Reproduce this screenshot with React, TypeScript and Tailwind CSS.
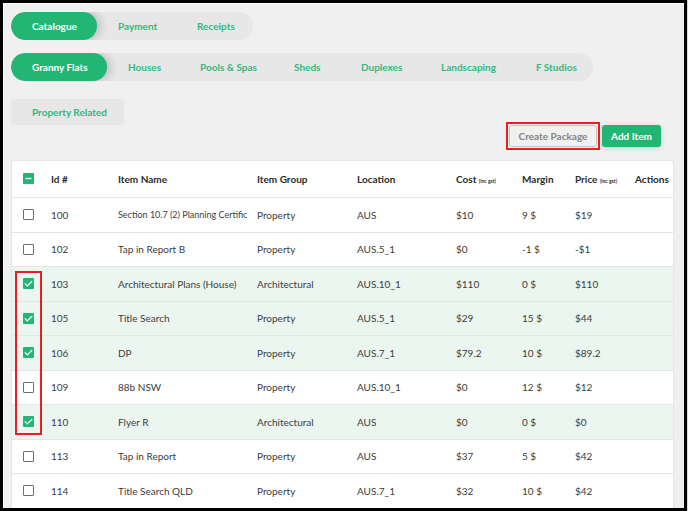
import { useEffect, useRef, useState } from "react";
import clsx from "clsx";

const sections = [
  { label: "Catalogue", width: "w-[86px]" },
  { label: "Payment", width: "w-[79px]" },
  { label: "Receipts", width: "w-[77px]" },
];

const categories = [
  { label: "Granny Flats", width: "w-[96px]" },
  { label: "Houses", width: "w-[72px]" },
  { label: "Pools & Spas", width: "w-[94px]" },
  { label: "Sheds", width: "w-[67px]" },
  { label: "Duplexes", width: "w-[80px]" },
  { label: "Landscaping", width: "w-[95px]" },
  { label: "F Studios", width: "w-[78px]" },
];

const items = [
  { id: 100, name: "Section 10.7 (2) Planning Certific", group: "Property", location: "AUS", cost: "$10", margin: "9 $", price: "$19" },
  { id: 102, name: "Tap in Report B", group: "Property", location: "AUS.5_1", cost: "$0", margin: "-1 $", price: "-$1" },
  { id: 103, name: "Architectural Plans (House)", group: "Architectural", location: "AUS.10_1", cost: "$110", margin: "0 $", price: "$110" },
  { id: 105, name: "Title Search", group: "Property", location: "AUS.5_1", cost: "$29", margin: "15 $", price: "$44" },
  { id: 106, name: "DP", group: "Property", location: "AUS.7_1", cost: "$79.2", margin: "10 $", price: "$89.2" },
  { id: 109, name: "88b NSW", group: "Property", location: "AUS.10_1", cost: "$0", margin: "12 $", price: "$12" },
  { id: 110, name: "Flyer R", group: "Architectural", location: "AUS", cost: "$0", margin: "0 $", price: "$0" },
  { id: 113, name: "Tap in Report", group: "Property", location: "AUS", cost: "$37", margin: "5 $", price: "$42" },
  { id: 114, name: "Title Search QLD", group: "Property", location: "AUS.7_1", cost: "$32", margin: "10 $", price: "$42" },
];

type Tab = { label: string; width: string };

function TabBar({ name, tabs }: { name: string; tabs: Tab[] }) {
  const [active, setActive] = useState(tabs[0].label);

  return (
    <nav aria-label={name} className="flex h-7 w-fit overflow-hidden rounded-full bg-[#e7e7e7]">
      {tabs.map((tab) => (
        <button
          key={tab.label}
          type="button"
          onClick={() => setActive(tab.label)}
          className={clsx(
            "h-7 shrink-0 rounded-full pl-[21px] text-left font-bold whitespace-nowrap",
            tab.width,
            active === tab.label ? "bg-[#23b574] text-white shadow-[3px_0_10px_rgba(0,0,0,0.2)]" : "text-[#35b77d]"
          )}
        >
          {tab.label}
        </button>
      ))}
    </nav>
  );
}

type CheckProps = { label: string; checked: boolean; mixed?: boolean; onChange: () => void };

function Check({ label, checked, mixed = false, onChange }: CheckProps) {
  const ref = useRef<HTMLInputElement>(null);

  useEffect(() => {
    if (ref.current) ref.current.indeterminate = mixed;
  }, [mixed]);

  return (
    <label className="relative ml-[11px] block size-[11px]">
      <input
        ref={ref}
        type="checkbox"
        aria-label={label}
        checked={checked}
        onChange={onChange}
        className={clsx(
          "block size-[11px] appearance-none rounded-[1px]",
          checked || mixed ? "bg-[#23b574]" : "border border-[#6f6f6f] bg-white"
        )}
      />
      {(checked || mixed) && (
        <svg viewBox="0 0 11 11" className="pointer-events-none absolute inset-0 size-[11px]" fill="none" stroke="white" strokeWidth="1.3">
          <path d={mixed ? "M2.5 5.5h6" : "M1.8 5.4l2.5 2.5 4.9-4.9"} />
        </svg>
      )}
    </label>
  );
}

export default function App() {
  const [selected, setSelected] = useState([103, 105, 106, 110]);
  const all = selected.length === items.length;

  const toggle = (id: number) =>
    setSelected((ids) => (ids.includes(id) ? ids.filter((other) => other !== id) : [...ids, id]));

  return (
    <div className="min-h-screen bg-[#d9d9d9] pr-px pb-px font-[Lato,sans-serif] text-[10px] leading-3 text-[#3c3c3c]">
      <main className="border-[3px] border-black bg-[#f0f0f0] pt-[9px] pr-[10px] pl-2 shadow-[inset_1px_1px_0_#fff]">
        <TabBar name="Sections" tabs={sections} />
        <div className="mt-[13px]">
          <TabBar name="Categories" tabs={categories} />
        </div>
        <button type="button" className="mt-[18px] block h-[26px] w-[113px] rounded-[3px] bg-[#e7e7e7] pl-[21px] text-left font-bold text-[#35b77d]">
          Property Related
        </button>

        <div className="mr-[13px] flex justify-end gap-[5px]">
          <div className="relative">
            <button type="button" className="block h-[22px] w-[88px] rounded-[3px] border border-[#c4c4c4] font-bold text-[#858585]">
              Create Package
            </button>
            <span className="pointer-events-none absolute -inset-[3px] border-2 border-[#ed1c24]" />
          </div>
          <button type="button" className="h-[22px] w-[59px] rounded-[3px] bg-[#23b574] font-bold text-white shadow-[0_1px_5px_rgba(0,0,0,0.15)]">
            Add Item
          </button>
        </div>

        <div className="relative mt-[13px] rounded-t-[3px] border border-b-0 border-[#e6e6e6] bg-white">
          <table className="w-full table-fixed border-collapse text-left">
            <colgroup>
              <col className="w-[39px]" />
              <col className="w-[67px]" />
              <col />
              <col className="w-[100px]" />
              <col className="w-[99px]" />
              <col className="w-[66px]" />
              <col className="w-[53px]" />
              <col className="w-[60px]" />
              <col className="w-[38px]" />
            </colgroup>
            <thead>
              <tr className="h-[36px] border-b border-[#e6e6e6] text-[#2b2b2b]">
                <th className="p-0">
                  <Check
                    label="Select all items"
                    checked={all}
                    mixed={!all && selected.length > 0}
                    onChange={() => setSelected(all ? [] : items.map((item) => item.id))}
                  />
                </th>
                <th className="p-0">Id #</th>
                <th className="p-0">Item Name</th>
                <th className="p-0">Item Group</th>
                <th className="p-0">Location</th>
                <th className="p-0 whitespace-nowrap">
                  Cost <small className="text-[5px] leading-none">(inc gst)</small>
                </th>
                <th className="p-0">Margin</th>
                <th className="p-0 whitespace-nowrap">
                  Price <small className="text-[5px] leading-none">(inc gst)</small>
                </th>
                <th className="p-0">Actions</th>
              </tr>
            </thead>
            <tbody>
              {items.map((item) => {
                const checked = selected.includes(item.id);
                return (
                  <tr
                    key={item.id}
                    className={clsx("border-b border-[#e2e6e4] odd:h-[35px] even:h-[34px] last:h-[34px] last:border-b-0", checked && "bg-[#ebf6f1]")}
                  >
                    <td className="p-0">
                      <Check label={`Select item ${item.id}`} checked={checked} onChange={() => toggle(item.id)} />
                    </td>
                    <td className="p-0">{item.id}</td>
                    {/* long names drop a size so they stay inside the column */}
                    <td className={clsx("p-0 whitespace-nowrap", item.name.length > 30 && "text-[9px]")}>{item.name}</td>
                    <td className="p-0">{item.group}</td>
                    <td className="p-0">{item.location}</td>
                    <td className="p-0">{item.cost}</td>
                    <td className="p-0">{item.margin}</td>
                    <td className="p-0">{item.price}</td>
                    <td className="p-0" />
                  </tr>
                );
              })}
            </tbody>
          </table>
          <span className="pointer-events-none absolute top-[110px] left-[3px] h-[164px] w-[27px] border-2 border-[#ed1c24]" />
        </div>
      </main>
    </div>
  );
}
